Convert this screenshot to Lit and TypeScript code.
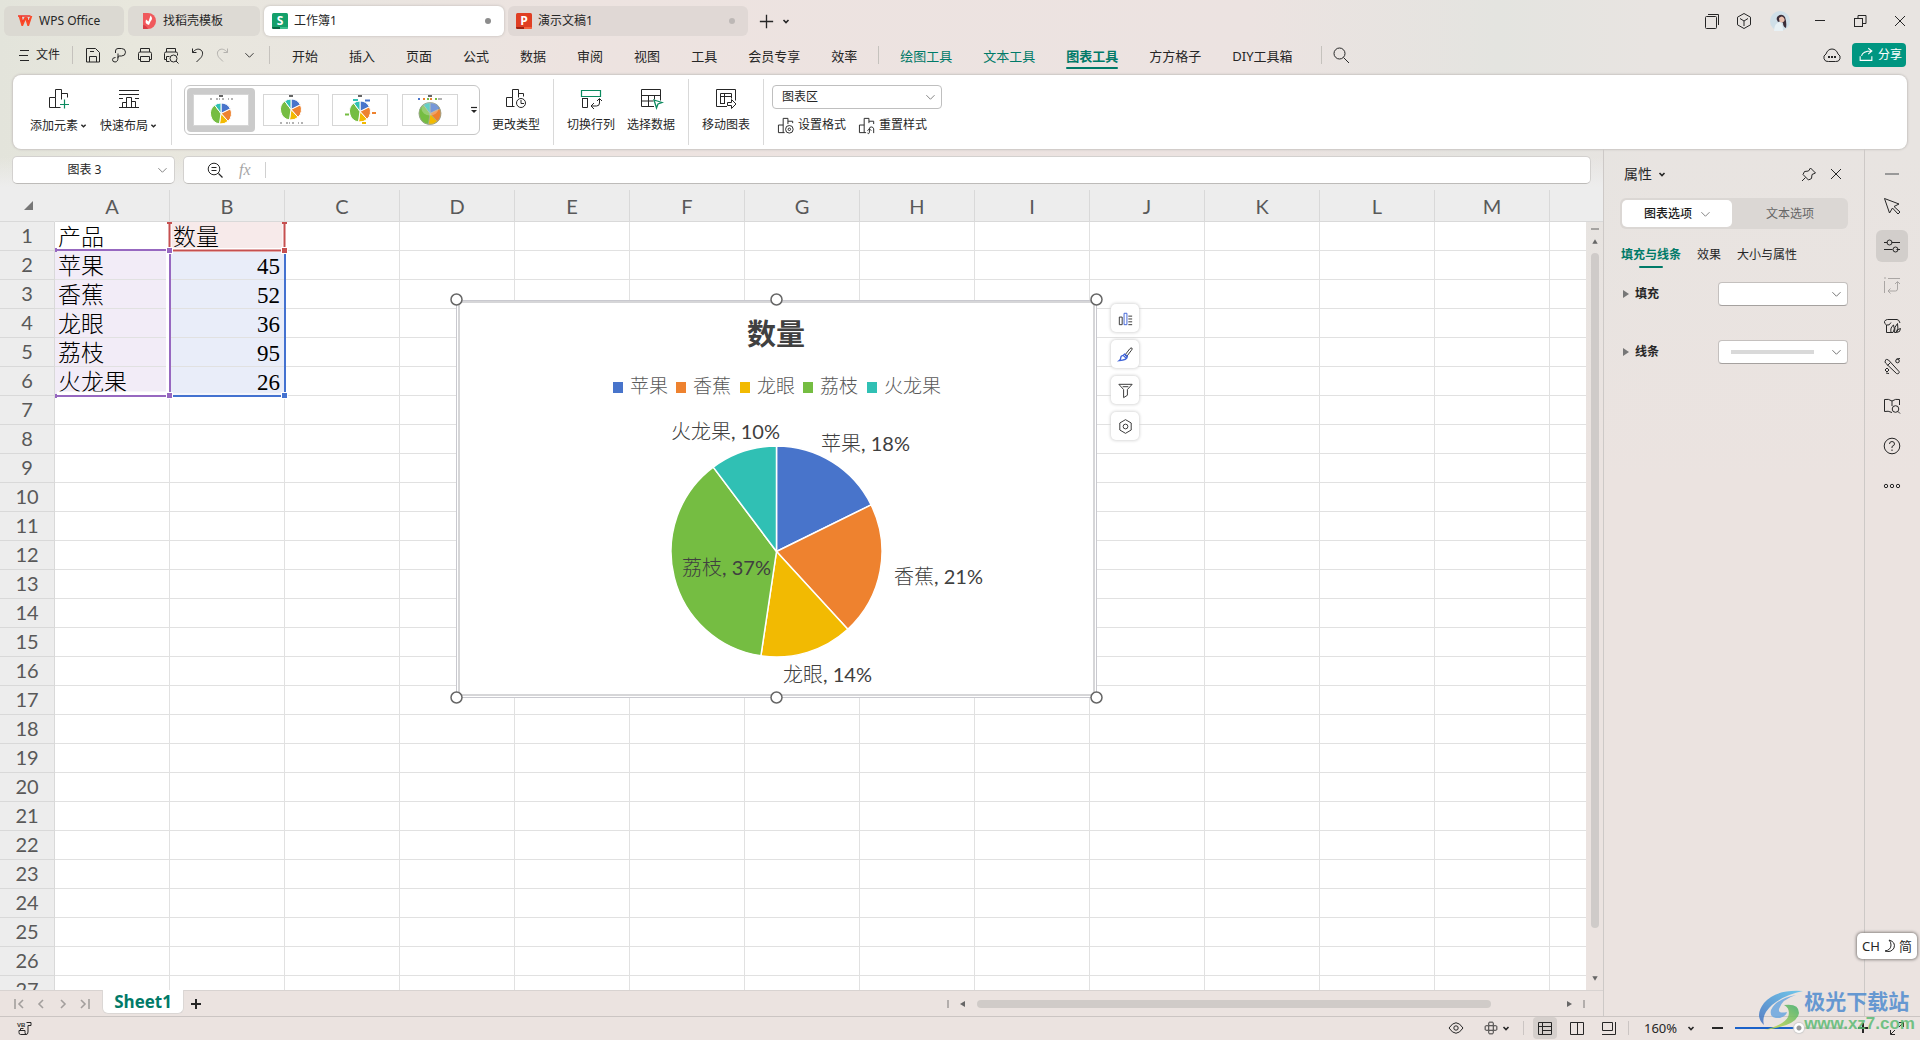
import { LitElement, html, svg, css, nothing } from "lit";
import { customElement, property } from "lit/decorators.js";
import { classMap } from "lit/directives/class-map.js";

interface Slice {
  name: string;
  value: number;
  share: number;
  color: string;
}

/* Shares are rounded so that they add up to one hundred. */
const DATA: Slice[] = [
  { name: "苹果", value: 45, share: 18, color: "#4874cb" },
  { name: "香蕉", value: 52, share: 21, color: "#ee822f" },
  { name: "龙眼", value: 36, share: 14, color: "#f2ba02" },
  { name: "荔枝", value: 95, share: 37, color: "#75bd42" },
  { name: "火龙果", value: 26, share: 10, color: "#30c0b4" },
];
const TOTAL = DATA.reduce((sum, d) => sum + d.value, 0);

/* Wedges of the pie, clockwise from twelve o'clock. */
const pie = (cx: number, cy: number, r: number, edge: string, edgeWidth: number) => {
  let angle = 0;
  return DATA.map((d) => {
    const from = angle;
    angle += (d.value / TOTAL) * Math.PI * 2;
    const point = (a: number) => `${(cx + r * Math.sin(a)).toFixed(2)} ${(cy - r * Math.cos(a)).toFixed(2)}`;
    const large = angle - from > Math.PI ? 1 : 0;
    return svg`<path d="M${cx} ${cy}L${point(from)}A${r} ${r} 0 ${large} 1 ${point(angle)}Z" fill=${d.color} stroke=${edge} stroke-width=${edgeWidth} stroke-linejoin="round"/>`;
  });
};

const ICONS: Record<string, unknown> = {
  menu: svg`<path d="M6 5.500h9M5 10.500h9M6 15.500h9"/>`,
  save: svg`<path d="M3.500 3.500h9l4 4v9.500h-13zM6.500 17v-5.500h7V17M7 6.500h4"/>`,
  pdf: svg`<path d="M6.500 8V6q0-2.500 2.500-2.500h3.500q4 0 4 3.700t-4 3.800H10q-1 0-1 1.500 0 4.500-3 4.500-2.500 0-2.500-2.300 0-2.200 3-2.200M9 8.500V13"/>`,
  print: svg`<path d="M5.500 7V3.500h9V7M5.500 14.500h-2V8.500q0-1.500 1.500-1.500h10q1.500 0 1.500 1.500v6h-2M5.500 11.500h9v5h-9z"/>`,
  preview: svg`<path d="M5.500 7V3.500h9V7M5.500 14.500h-2V8.500q0-1.500 1.500-1.500h10q1.500 0 1.500 1.500v2M5.500 16.500V11.500h3M5.500 16.500h3"/><circle cx="12.500" cy="13.500" r="3.500"/><path d="M15 16l2.500 2.500"/>`,
  undo: svg`<path d="M5.500 3.500v4h4M5.500 7.500C8 4.500 10.500 3.500 13 4.500c3.500 1.500 3 5.500 1 8l-4.500 4.500"/>`,
  redo: svg`<path d="M14.500 3.500v4h-4M14.500 7.500C12 4.500 9.500 3.500 7 4.500c-3.500 1.500-3 5.500-1 8l4 4"/>`,
  down: svg`<path d="M6 8l4.500 4.500L15 8"/>`,
  caret: svg`<path d="M7.500 9l2.500 2.500L12.500 9" stroke-width="1.600"/>`,
  search: svg`<circle cx="8.500" cy="8.500" r="5.500"/><path d="M12.500 12.500l5.500 5.500"/>`,
  cloud: svg`<path d="M6.500 16.500h7a4 4 0 0 0 2.500-7.500c-1-3-3-5-6-5s-5 2-6 5a4 4 0 0 0 2.500 7.500z"/><path d="M6 11h2v2H6zM9 11h2v2H9zM12 11h2v2h-2z" fill="currentColor" stroke="none"/>`,
  share: svg`<path d="M3.500 11.500v4.500h13v-4.500M5 11c1-4 4-5.500 11-5.500M12.500 2.500l4 3-4 3.500" stroke-width="1.200"/>`,
  windows: svg`<path d="M6 3.500h10.500V14"/><rect x="3.500" y="5.500" width="11" height="12" rx="1"/>`,
  cube: svg`<path d="M10 2.500l6.500 3.700v7.600L10 17.500l-6.500-3.700V6.200zM6 7.500L10 10l4-2.500M10 10v5"/>`,
  minimize: svg`<path d="M5 9.500h10"/>`,
  restore: svg`<path d="M8 7V4.500h8v8h-3"/><rect x="4.500" y="7.500" width="8" height="8"/>`,
  close: svg`<path d="M5 5l10 10M15 5L5 15"/>`,
  plus: svg`<path d="M10 3v14M3 10h14" stroke-width="1.400"/>`,
  addElement: svg`<path d="M11.500 18.500h-11v-10h6v10M6.500 8.500v-8h6v10M12.500 4.500h6v4"/><path d="M15.500 10.500v9M11 15.500h9" stroke="#0b8a5f" stroke-width="1.200"/>`,
  layout: svg`<path d="M0 1.500h20M0 5.500h20M0 9.500h4M16 9.500h4M0 18.500h20M3.500 18v-4.500h4M7.500 18V8.500h5V18M12.500 12.500h4V18"/>`,
  changeType: svg`<path d="M8.500 17.500h-8v-9h6v9M6.500 8.500v-8h6v8M12.500 4.500h5v3"/><circle cx="15" cy="14" r="4.500"/><path d="M15 11v3.500h3"/>`,
  swap: svg`<path d="M.500 1.500h19v6H.500z" stroke="#0b8a5f" stroke-width="1.200"/><path d="M1 9.500h6M1.500 9v9.500h5V9"/><path d="M18.500 10v4q0 3-3 3h-5M16 12l2.500-2.500L21 12M13 14l-3 3 3 3" />`,
  select: svg`<path d="M13 17.500H.500V.500h19v11M.500 6.500h19M7.500 6.500v11M13.500 6.500v4M.500 12h12"/><path d="M13 11l8 2.500-4 1.500-1.500 4z" stroke="#0b8a5f" stroke-width="1.300"/>`,
  move: svg`<path d="M11 17.500H.500V.500h19v11M4.500 14.500V4.500h11v5M4.500 7.500h11M8.500 4.500v9.500M4 14.500h5"/><path d="M11.500 13.500h4v-3l4.500 4.500-4.500 4.500v-3h-4z"/>`,
  format: svg`<path d="M8 17.500H1.500v-8h5v8M6.500 9.500v-7h5v6M11.500 5.500h5v2"/><circle cx="13" cy="14" r="4"/><circle cx="13" cy="14" r="1.300"/>`,
  reset: svg`<path d="M8.500 17.500h-7v-8h5v8M6.500 9.500v-7h5v5M11.500 5.500h5v3M10 18c1 1 2 .5 2-1v-3.500q0-2 2-2t2.500 2V18M10 15.500l2-2 2 2"/>`,
  zoomOut: svg`<circle cx="9" cy="9" r="5.800"/><path d="M13.500 13.500l4 4M6.500 7.500h5M6.500 10.500h5" stroke-width="1.200"/>`,
  chartBars: svg`<path d="M3.500 8.500h3v8h-3zM13 7.500h4M13 10.500h4M13 13.500h4M13 16.500h4"/><path d="M8.500 4.500h3v12h-3z" stroke="#3f63d8"/>`,
  brush: svg`<path d="M9.500 10.500l5-6.500q1.500-1.500 2.300-.700t-.5 2.200l-5 6.500z"/><path d="M9 9.500l3 2.500q-.5 4-8.500 4.500 1.500-1 1.500-3t2.500-2.500zM8 11.500l2.500 2" stroke="#3f63d8" stroke-width="1.400"/>`,
  funnel: svg`<path d="M3 3.500h14l-5 5.500v6l-4 2.500V9zM7 6h6"/>`,
  hex: svg`<path d="M10 2.800l6 3.500v7.400l-6 3.500-6-3.500V6.300z"/><circle cx="10" cy="10" r="2.500"/>`,
  pin: svg`<path d="M11.500 4l5 5-3.500 1.500-.5 4-3 1.500-5.500-5.500 1.500-3 4-.5zM6.500 13.500L3 17"/>`,
  dash: svg`<path d="M3 10h14" stroke="#999" stroke-width="2"/>`,
  cursor: svg`<path d="M2.500 2.500l14.500 5.500-5 2.500 6 5.500-2 2-5.500-6-3 5z"/>`,
  sliders: svg`<path d="M2 6.500h3.500M9.500 6.500H18M2 13.500h8.500M14.500 13.500H18"/><circle cx="7.500" cy="6.500" r="2.500"/><circle cx="13.500" cy="13.500" r="2.500"/>`,
  rotate: svg`<path d="M2.500 5v12M6 2.500h12M2 2h2M15.500 6v7q0 2-2 2H6M13 8l2.500-2.500L18 8M8.500 12.500L6 15l2.500 2.500"/>`,
  store: svg`<path d="M9 16.500H4.500V9Q2 7.500 2.500 5.500 3.500 3.500 5.500 3.500h9.500q2 0 3 3.500M4.500 9q3 1 4.500-2.500"/><path d="M9 16.500q-1-5 2.500-7.500 2 4-.5 7.500zM12.500 16.500q-.5-6 3-9 1.500 5-1.500 9zM14.500 16.500q1-4 4-4 0 4-4 4z"/>`,
  tools: svg`<path d="M3 4.500q1.500-2 3.500-.5L17 15.500q.5 1.500-.5 2t-2 0L3.500 7q-1-1 0-2.500zM5.500 9.500L8.500 6.500"/><circle cx="15.500" cy="5" r="1.800"/><path d="M14.500 3l3.500-.5M5 12l2 2-2 2-2-2zM4 17l3 .5"/>`,
  book: svg`<path d="M10 16.500q-4-2-7.500-1V3.500q4-1 7.500 1.500 3.500-2.500 7.500-1.500V9M10 5v5"/><circle cx="13.500" cy="13" r="3.300"/><path d="M16 15.500l2 2"/>`,
  help: svg`<circle cx="10" cy="10" r="7.800"/><path d="M7.500 8q0-2.500 2.500-2.500T12.500 8q0 1.500-2.500 2.500v1.500M10 13.500v1.500"/>`,
  more: svg`<circle cx="4" cy="10" r="1.700"/><circle cx="10" cy="10" r="1.700"/><circle cx="16" cy="10" r="1.700"/>`,
  first: svg`<path d="M6 5v10M14 6l-4 4 4 4" stroke-width="1.600"/>`,
  prev: svg`<path d="M12 6l-4 4 4 4" stroke-width="1.600"/>`,
  next: svg`<path d="M8 6l4 4-4 4" stroke-width="1.600"/>`,
  last: svg`<path d="M14 5v10M6 6l4 4-4 4" stroke-width="1.600"/>`,
  add: svg`<path d="M10 5v10M5 10h10" stroke-width="2"/>`,
  left: svg`<path d="M12 7v6l-5-3z" fill="#666" stroke="none"/>`,
  right: svg`<path d="M8 7v6l5-3z" fill="#666" stroke="none"/>`,
  up: svg`<path d="M7 12h6l-3-5z" fill="#666" stroke="none"/>`,
  bottom: svg`<path d="M7 8h6l-3 5z" fill="#666" stroke="none"/>`,
  eye: svg`<path d="M3 10q7-10.500 14 0-7 10.500-14 0z"/><circle cx="10" cy="10" r="2.200"/>`,
  cross: svg`<rect x="7.500" y="7.500" width="5" height="5"/><path d="M7.500 7V4.500q0-1 1-1h3q1 0 1 1V7M7.500 13v2.500q0 1 1 1h3q1 0 1-1V13M7 7.500H4.500q-1 0-1 1v3q0 1 1 1H7M13 7.500h2.500q1 0 1 1v3q0 1-1 1H13"/>`,
  gridView: svg`<path d="M3.500 4.500h13v12h-13zM3.500 8.500h13M7.500 4.500v12M7.500 12.500h9"/>`,
  pageView: svg`<path d="M3.500 4.500h13v12h-13zM10.500 4.500v12"/>`,
  breakView: svg`<path d="M3.500 4.500h10v8h-10zM16.500 4v12.500H3"/>`,
  expand: svg`<path d="M12 4.500h4.500V9M8 16.500H3.500V12M16 5l-4 4M4 16l4-4"/>`,
};

const icon = (name: string, size = 20) =>
  html`<svg class="icon" width=${size} height=${size} viewBox="0 0 20 20" aria-hidden="true">${ICONS[name]}</svg>`;

const iconStyles = css`
  .icon { display: block; flex: none; fill: none; stroke: currentColor; overflow: visible; }
  button, select, input { font: inherit; color: inherit; margin: 0; padding: 0; border: 0; background: none; border-radius: 0; outline: none; }
  button { display: flex; align-items: center; justify-content: center; white-space: nowrap; }
  a { color: inherit; text-decoration: none; }
  .spacer { flex: 1; }
`;

@customElement("title-bar")
export class TitleBar extends LitElement {
  static styles = [iconStyles, css`
    :host { display: flex; align-items: center; box-sizing: border-box; height: 40px; padding: 6px 0 4px 4px; }
    .tabs { display: flex; gap: 4px; }
    .tab { box-sizing: border-box; height: 30px; padding: 0 13px; gap: 6px; border-radius: 6px; background: #dbd9d2; justify-content: flex-start; }
    .home { width: 120px; }
    .store { width: 132px; background: #dddad4; }
    .file { width: 240px; padding: 0 13px 0 8px; background: #e0d8d5; }
    .file.current { background: #fff; box-shadow: 0 0 3px #bbb6b2; }
    .dot { width: 6px; height: 6px; border-radius: 50%; background: #8c8c8c; }
    .file:not(.current) .dot { background: #bdb8b6; }
    .new { width: 36px; height: 30px; }
    .list { width: 4px; }
    .right { display: flex; align-items: center; }
    .right button { width: 40px; height: 30px; }
    .right .slim { width: 32px; }
  `];
  render() {
    return html`
      <div class="tabs">
        <button class="tab home">
          <svg width="16" height="16" viewBox="0 0 16 16" aria-hidden="true"><path d="M1 3h3l1.500 7L8 5h2l1 5 2.500-5M4 3h9.500" fill="none" stroke="#f0322c" stroke-width="1.600"/><path d="M1.500 3l3 10h1.500L8.500 7l2 6H12l3.300-10h-2L11.300 9 9.500 4H8L5.500 9.500 4 3z" fill="#fb4a28"/></svg>
          WPS Office
        </button>
        <button class="tab store">
          <svg width="16" height="16" viewBox="0 0 16 16" aria-hidden="true"><path d="M2 0h5a8 8 0 0 1 0 16H2z" fill="#f0595c"/><path d="M2 12q3 0 5 4H2z" fill="#d83c44"/><path d="M9.500 2.500q3 3 0 6l-1.500 3.500Q3.500 11 5 6.500l2.500 2z" fill="#fff"/></svg>
          找稻壳模板
        </button>
        <button class="tab file current">
          <svg width="16" height="16" viewBox="0 0 16 16" aria-hidden="true"><rect width="16" height="16" rx="1.500" fill="#14a06b"/><path d="M0 14h8v2H1.500Q0 16 0 14z" fill="#066844"/><path d="M8 14h8q0 2-1.500 2H8z" fill="#3cbf8c"/><text x="8" y="12" text-anchor="middle" font-family="Open Sans" font-weight="700" font-size="12" fill="#fff">S</text></svg>
          工作簿1<span class="spacer"></span><span class="dot"></span>
        </button>
        <button class="tab file">
          <svg width="16" height="16" viewBox="0 0 16 16" aria-hidden="true"><rect width="16" height="16" rx="1.500" fill="#e03e23"/><path d="M0 14h8v2H1.500Q0 16 0 14z" fill="#9c2413"/><path d="M8 14h8q0 2-1.500 2H8z" fill="#f5623f"/><text x="8" y="12" text-anchor="middle" font-family="Open Sans" font-weight="700" font-size="12" fill="#fff">P</text></svg>
          演示文稿1<span class="spacer"></span><span class="dot"></span>
        </button>
      </div>
      <button class="new" aria-label="新建">${icon("plus", 19)}</button>
      <button class="list" aria-label="标签列表">${icon("caret")}</button>
      <span class="spacer"></span>
      <div class="right">
        <button class="slim" aria-label="窗口">${icon("windows")}</button>
        <button class="slim" aria-label="应用">${icon("cube")}</button>
        <button aria-label="账号">
          <svg width="20" height="20" viewBox="0 0 20 20" aria-hidden="true"><circle cx="10" cy="10" r="10" fill="#cfdfe8"/><path d="M4 20q0-8 6-9 3 2 3 9z" fill="#e8f1f5"/><path d="M8 5q4-3 7 1 2 6 1 11-3-1-3-5l-2-2-3 1-1-2q-1-2 1-4z" fill="#3b2d38"/><path d="M9 7q3-3 5 0t-2 4.500q-3 0-3-4.500z" fill="#e9bfae"/></svg>
        </button>
        <button aria-label="最小化">${icon("minimize")}</button>
        <button aria-label="还原">${icon("restore")}</button>
        <button aria-label="关闭">${icon("close")}</button>
      </div>`;
  }
}

@customElement("menu-bar")
export class MenuBar extends LitElement {
  static styles = [iconStyles, css`
    :host { display: flex; align-items: center; height: 35px; padding: 0 14px 5px 14px; box-sizing: border-box; }
    .file { gap: 2px; height: 24px; }
    .sep { width: 1px; height: 18px; background: #c5c2bd; }
    .sep.a { margin: 0 7px 0 12px; }
    .sep.b { margin: 0 22px 0 7px; }
    .sep.c { margin: 0 21px; }
    .sep.d { margin: 0 9px 0 28px; }
    .quick { width: 26px; height: 24px; }
    .quick.off { color: #b4b2ae; }
    nav { display: flex; gap: 31px; font-size: 13px; line-height: 22px; padding-top: 1px; white-space: nowrap; }
    .tool { color: #007a68; }
    .on { font-weight: 700; position: relative; }
    .on::after { content: ""; position: absolute; left: 0; right: 0; bottom: -2px; height: 2px; border-radius: 1px; background: #007a68; }
    .cloud { width: 28px; }
    .share { height: 24px; padding: 0 4px 0 5px; gap: 3px; border-radius: 4px; background: #009681; color: #fff; margin-left: 6px; }
  `];
  render() {
    const main = ["开始", "插入", "页面", "公式", "数据", "审阅", "视图", "工具", "会员专享", "效率"];
    const quick: [string, string][] = [["save", "保存"], ["pdf", "输出为PDF"], ["print", "打印"], ["preview", "打印预览"], ["undo", "撤销"], ["redo", "恢复"], ["down", "更多"]];
    return html`
      <button class="file">${icon("menu")}文件</button>
      <span class="sep a"></span>
      ${quick.map(([n, t]) => html`<button class=${classMap({ quick: true, off: n === "redo" })} aria-label=${t}>${icon(n, n === "down" ? 18 : 20)}</button>`)}
      <span class="sep b"></span>
      <nav>${main.map((m) => html`<a href="#">${m}</a>`)}</nav>
      <span class="sep c"></span>
      <nav>
        <a class="tool" href="#">绘图工具</a><a class="tool" href="#">文本工具</a><a class="tool on" href="#">图表工具</a>
        <a href="#">方方格子</a><a href="#">DIY工具箱</a>
      </nav>
      <span class="sep d"></span>
      <button aria-label="搜索">${icon("search")}</button>
      <span class="spacer"></span>
      <button class="cloud" aria-label="云状态">${icon("cloud")}</button>
      <button class="share">${icon("share", 18)}分享</button>`;
  }
}

@customElement("ribbon-bar")
export class RibbonBar extends LitElement {
  static styles = [iconStyles, css`
    :host { display: flex; box-sizing: border-box; height: 74px; margin: 0 13px; padding-left: 17px; border-radius: 8px; background: #fff; box-shadow: 0 0 2px 1px #c9c5c2; }
    .cmd { flex-direction: column; justify-content: flex-start; gap: 8px; padding-top: 14px; }
    .label { display: flex; align-items: center; line-height: 16px; }
    .label .icon { margin: 0 -4px 0 -3px; }
    .cmd + .cmd { margin-left: 12px; }
    .sep { flex: none; width: 1px; height: 66px; margin: 4px 13px 0; background: #d9d9d9; }
    .sep.tight { margin-right: 8px; }
    .gallery { display: flex; align-items: center; box-sizing: border-box; width: 296px; height: 50px; margin: 10px 12px 0 -1px; padding-left: 2px; gap: 2px; border: 1px solid #c6c6c6; border-radius: 6px; }
    .thumb { width: 68px; height: 44px; border-radius: 4px; }
    .thumb.on { background: #cbcbcb; }
    .drop { width: 10px; margin-left: 3px; }
    .area { display: grid; align-content: start; gap: 8px; padding-top: 10px; }
    .pick { display: grid; align-items: center; width: 170px; height: 24px; box-sizing: border-box; border: 1px solid #bfbfbf; border-radius: 4px; }
    .pick select { grid-area: 1 / 1; appearance: none; width: 100%; height: 100%; padding-left: 9px; }
    .pick .icon { grid-area: 1 / 1; justify-self: end; margin-right: 2px; pointer-events: none; color: #777; }
    .row { display: flex; gap: 12px; padding-left: 5px; line-height: 16px; }
    .row button { gap: 2px; height: 16px; }
  `];
  private thumb(kind: number) {
    const dots = (y: number) => svg`<path d="M17 ${y}h3m3 0h4m2 0h3m3 0h1m2 0h3" stroke="#999" stroke-width="1.500" stroke-dasharray="2 1"/>`;
    const body = [
      svg`${dots(5)}${pie(28, 19.5, 10.500, "#fff", 1)}`,
      svg`${pie(28, 15.500, 10.500, "#fff", 1)}${dots(29)}`,
      svg`${pie(28, 17.500, 10.500, "#fff", 1)}<path d="M33 6.500h5" stroke="#4874cb" stroke-width="2"/><path d="M40 19h4" stroke="#ee822f" stroke-width="2"/><path d="M30 29h4" stroke="#f2ba02" stroke-width="2"/><path d="M13 20.500h4" stroke="#75bd42" stroke-width="2"/><path d="M21 6h5" stroke="#30c0b4" stroke-width="2"/>`,
      svg`<path d="M16 5h2" stroke="#4874cb" stroke-width="2"/><path d="M21 5h2m5 0h2" stroke="#ee822f" stroke-width="2"/><path d="M25 5h2m6 0h2" stroke="#75bd42" stroke-width="2"/><path d="M36 5h4" stroke="#999" stroke-width="1.500"/><circle cx="28" cy="19.500" r="11.300" fill="#8a8f7a"/>${pie(28, 19.5, 10.8, "#a5b09c", 0.600)}<ellipse cx="28" cy="15" rx="8.500" ry="6.500" fill="#fff" opacity=".25"/>`,
    ][kind];
    return html`<svg width="56" height="32" viewBox="0 0 56 32" aria-hidden="true"><rect x=".5" y=".5" width="55" height="31" fill="#fff" stroke="#d6d6d6"/><path d="M26 2h4" stroke="#333" stroke-width="1.500"/>${body}</svg>`;
  }
  private cmd(name: string, label: string, caret = false) {
    return html`<button class="cmd">${icon(name)}<span class="label">${label}${caret ? icon("caret", 17) : nothing}</span></button>`;
  }
  render() {
    return html`
      ${this.cmd("addElement", "添加元素", true)}${this.cmd("layout", "快速布局", true)}
      <span class="sep"></span>
      <div class="gallery">
        ${[0, 1, 2, 3].map((k) => html`<button class=${classMap({ thumb: true, on: k === 0 })} aria-label=${`样式${k + 1}`}>${this.thumb(k)}</button>`)}
        <button class="drop" aria-label="更多样式"><svg class="icon" width="10" height="10" viewBox="0 0 10 10" aria-hidden="true"><path d="M2 2.500h6" stroke-width="1.200"/><path d="M2 5h6L5 8z" fill="currentColor" stroke="none"/></svg></button>
      </div>
      ${this.cmd("changeType", "更改类型")}
      <span class="sep"></span>
      ${this.cmd("swap", "切换行列")}${this.cmd("select", "选择数据")}
      <span class="sep"></span>
      ${this.cmd("move", "移动图表")}
      <span class="sep tight"></span>
      <div class="area">
        <div class="pick"><select aria-label="图表元素"><option>图表区</option></select>${icon("down", 18)}</div>
        <div class="row"><button>${icon("format", 19)}设置格式</button><button>${icon("reset", 19)}重置样式</button></div>
      </div>`;
  }
}

@customElement("pie-chart")
export class PieChart extends LitElement {
  static styles = css`
    :host { display: block; }
    .plot { display: block; width: 100%; height: 100%; overflow: visible; }
    .title { font: 700 29px "Liberation Serif", "Noto Sans CJK SC", serif; fill: #404040; }
    .key { font: 300 19px "Liberation Serif", "Noto Sans CJK SC", serif; fill: #595959; }
    .tag { font: 300 20px "Lato", "Noto Sans CJK SC", sans-serif; fill: #404040; }
    .num { font-weight: 400; }
    .frame { fill: #fff; stroke: #d6d6d8; stroke-width: 2; }
    .outline { fill: #fff; stroke: #c9c9cf; }
    .handle { fill: #fff; stroke: #666; stroke-width: 1.500; }
  `;
  render() {
    const keys = [157, 220, 284, 347, 411];
    const tags = [[365, 152], [438, 285], [327, 383], [226, 276], [215, 140]];
    return html`<svg class="plot" viewBox="0 0 640 398" role="img" aria-label="数量">
      <rect class="outline" x=".5" y="1.500" width="640" height="397"/>
      <rect class="frame" x="3" y="3" width="635" height="393"/>
      <text class="title" x="320" y="46" text-anchor="middle">数量</text>
      ${DATA.map((d, i) => svg`<rect x=${keys[i]} y="83" width="10" height="11" fill=${d.color}/><text class="key" x=${keys[i] + 17} y="94">${d.name}</text>`)}
      ${pie(320.5, 252.5, 105.500, "#fff", 1.500)}
      ${DATA.map((d, i) => svg`<text class="tag" x=${tags[i][0]} y=${tags[i][1]}>${d.name}<tspan class="num">, ${d.share}%</tspan></text>`)}
      ${[0, 320, 640].map((x) => [0.5, 398.5].map((y) => svg`<circle class="handle" cx=${x + 0.5} cy=${y} r="5.500"/>`))}
    </svg>`;
  }
}

@customElement("sheet-grid")
export class SheetGrid extends LitElement {
  static styles = [iconStyles, css`
    :host { display: grid; grid-template-columns: minmax(0, 1fr) 17px; min-height: 0; overflow: hidden; }
    .canvas { position: relative; overflow: hidden; background: #fff; }
    table { border-collapse: separate; border-spacing: 0; table-layout: fixed; width: 1665px; }
    .corner { width: 55px; }
    th { box-sizing: border-box; font: 400 20px/26px "Lato", "Noto Sans", sans-serif; color: #595959; background: #ededed; border: 0 solid #d9d9d9; border-width: 0 1px 1px 0; padding: 0; text-align: center; }
    thead th { height: 34px; padding-top: 2px; border-image: linear-gradient(#ededed 3px, #d9d9d9 3px) 1; }
    thead th:first-child { border-right-color: #ededed; border-image: none; }
    thead svg { display: block; margin-left: 24px; }
    tbody th { height: 29px; padding-bottom: 2px; line-height: 24px; }
    td { box-sizing: border-box; height: 29px; padding: 3px 4px 0 3px; border: 0 solid #e1e1e1; border-width: 0 1px 1px 0; font: 300 23px/24px "Liberation Serif", "Noto Sans CJK SC", serif; color: #000; white-space: nowrap; }
    .number { text-align: right; }
    .cat { background: #f2ecf7; }
    .val { background: #e9edf9; }
    .head { background: #f7eaea; }
    .ranges { position: absolute; left: 0; top: 0; }
    .chart { position: absolute; left: 456px; top: 111px; width: 640px; height: 398px; }
    .float { position: absolute; left: 1111px; top: 116px; display: grid; gap: 8px; }
    .float button { width: 28px; height: 28px; border-radius: 5px; background: #fff; box-shadow: 0 0 3px 1px #dadada; color: #333; }
    .side { display: flex; flex-direction: column; align-items: center; }
    .cap { align-self: stretch; height: 34px; box-sizing: border-box; background: #ededed; border-bottom: 1px solid #d9d9d9; }
    .split { width: 8px; height: 2px; margin: 6px 0 3px; background: #a5a3a1; }
    .track { flex: 1; align-self: stretch; padding: 2px 4px 0; display: flex; flex-direction: column; }
    .thumb { flex: 0 1 675px; width: 8px; margin: 0 auto; border-radius: 4px; background: #cfcbc9; }
    .arrow { margin-bottom: 3px; }
  `];
  render() {
    const cols = [..."ABCDEFGHIJKLMN"];
    const cell = (r: number, c: number) => {
      if (c > 1 || r > 6) return html`<td></td>`;
      if (r === 1) return c === 0 ? html`<td>产品</td>` : html`<td class="head">数量</td>`;
      const d = DATA[r - 2];
      return c === 0 ? html`<td class="cat">${d.name}</td>` : html`<td class="val number">${d.value}</td>`;
    };
    const knob = (x: number, y: number, color: string) => svg`<rect x=${x - 3} y=${y - 3} width="6" height="6" fill=${color} stroke="#fff"/>`;
    return html`
      <div class="canvas">
        <table>
          <thead><tr>
            <th class="corner"><svg width="9" height="9" viewBox="0 0 9 9" aria-hidden="true"><path d="M9 0v9H0z" fill="#777"/></svg></th>
            ${cols.map((c, i) => html`<th scope="col">${i < 13 ? c : nothing}</th>`)}
          </tr></thead>
          <tbody>${Array.from({ length: 27 }, (_, i) => html`<tr><th scope="row">${i + 1}</th>${cols.map((_c, c) => cell(i + 1, c))}</tr>`)}</tbody>
        </table>
        <svg class="ranges" width="300" height="220" fill="none" aria-hidden="true">
          <path d="M57 205.500h110M168 60v146" stroke="#fff" stroke-width="4"/>
          <path d="M172 206h110" stroke="#fff"/>
          <path d="M170 208h115V63" stroke="#4472d0" stroke-width="2"/>
          <path d="M56 62h114v146H56M56 60v4M56 206v4" stroke="#9768c0" stroke-width="2"/>
          <path d="M169.500 35v27h115V35" stroke="#fff" stroke-width="4"/>
          <path d="M167 35h5M169.500 35v26M282 35h5M284.500 35v26M172 62.500h112" stroke="#c65050" stroke-width="2"/>
          ${knob(169.5, 62.5, "#9768c0")}${knob(284.5, 62.5, "#c65050")}${knob(169.5, 207.5, "#9768c0")}${knob(284.5, 207.5, "#4472d0")}
        </svg>
        <pie-chart class="chart"></pie-chart>
        <div class="float">
          <button aria-label="图表元素">${icon("chartBars", 19)}</button>
          <button aria-label="图表样式">${icon("brush", 19)}</button>
          <button aria-label="图表筛选">${icon("funnel", 19)}</button>
          <button aria-label="设置图表区域格式">${icon("hex", 19)}</button>
        </div>
      </div>
      <div class="side">
        <div class="cap"></div><div class="split"></div>
        ${icon("up", 18)}
        <div class="track"><div class="thumb"></div></div>
        <div class="arrow">${icon("bottom", 18)}</div>
      </div>`;
  }
}

@customElement("property-panel")
export class PropertyPanel extends LitElement {
  static styles = [iconStyles, css`
    :host { display: block; box-sizing: border-box; padding: 11px 16px 0; border-left: 1px solid #cdc9c7; }
    header { display: flex; align-items: center; height: 28px; padding-left: 4px; font-size: 14px; }
    header .close { margin: 0 2px 0 7px; }
    .segment { display: flex; box-sizing: border-box; height: 31px; margin-top: 10px; padding: 2px; border-radius: 6px; background: #dbd7d4; }
    .segment button { flex: 1; color: #666; padding-left: 2px; }
    .segment .on { flex: 0 0 110px; box-sizing: border-box; gap: 4px; padding-left: 4px; border-radius: 5px; background: #fff; color: #1c1c1c; font-weight: 500; }
    .segment .icon { color: #777; }
    .tabs { display: flex; gap: 16px; margin: 14px 0 0 1px; line-height: 24px; }
    .tabs .on { position: relative; font-weight: 700; color: #007a68; }
    .tabs .on::after { content: ""; position: absolute; left: 18px; right: 18px; bottom: -1px; height: 2px; border-radius: 1px; background: #007a68; }
    .row { display: flex; align-items: center; height: 24px; margin-top: 15px; }
    .row + .row { margin-top: 34px; }
    .row label { flex: 1; padding-left: 6px; font-weight: 700; }
    .row > svg { margin-left: 3px; }
    .pick { display: grid; align-items: center; box-sizing: border-box; width: 130px; height: 24px; border: 1px solid #c4c0be; border-bottom-color: #a5a19f; border-radius: 4px; background: #fff; }
    .pick > * { grid-area: 1 / 1; }
    .pick select { appearance: none; width: 100%; height: 100%; }
    .pick .icon { justify-self: end; margin-right: 2px; color: #666; pointer-events: none; }
    .stroke { width: 83px; height: 4px; margin-left: 12px; background: #d9d9d9; pointer-events: none; }
  `];
  render() {
    const tri = html`<svg width="6" height="8" viewBox="0 0 6 8" aria-hidden="true"><path d="M0 0l6 4-6 4z" fill="#777"/></svg>`;
    return html`
      <header>属性${icon("caret")}<span class="spacer"></span>
        <button aria-label="固定">${icon("pin")}</button><button class="close" aria-label="关闭">${icon("close")}</button></header>
      <div class="segment"><button class="on">图表选项${icon("down", 18)}</button><button>文本选项</button></div>
      <div class="tabs"><a class="on" href="#">填充与线条</a><a href="#">效果</a><a href="#">大小与属性</a></div>
      <div class="row">${tri}<label for="fill">填充</label><div class="pick"><select id="fill"><option></option></select>${icon("down", 18)}</div></div>
      <div class="row">${tri}<label for="line">线条</label><div class="pick"><select id="line"><option></option></select><span class="stroke"></span>${icon("down", 18)}</div></div>`;
  }
}

@customElement("tool-rail")
export class ToolRail extends LitElement {
  static styles = [iconStyles, css`
    :host { display: flex; flex-direction: column; align-items: center; gap: 8px; box-sizing: border-box; padding: 17px 2px 0 0; border-left: 1px solid #cdc9c7; }
    button { width: 32px; height: 32px; border-radius: 6px; }
    .mini { height: 16px; }
    .on { background: #d2cecb; }
    .off { color: #aaa6a4; }
  `];
  render() {
    const items: [string, string][] = [["cursor", "选择"], ["sliders", "属性"], ["rotate", "行列"], ["store", "稻壳"], ["tools", "工具"], ["book", "查找"], ["help", "帮助"], ["more", "更多"]];
    return html`<button class="mini" aria-label="收起">${icon("dash")}</button>
      ${items.map(([n, t]) => html`<button class=${classMap({ on: n === "sliders", off: n === "rotate" })} aria-label=${t}>${icon(n)}</button>`)}`;
  }
}

@customElement("status-bar")
export class StatusBar extends LitElement {
  @property({ type: Number }) zoom = 160;
  static styles = [iconStyles, css`
    :host { display: flex; align-items: center; box-sizing: border-box; height: 24px; padding: 0 11px 2px 12px; border-top: 1px solid #cbc5c3; }
    button { height: 22px; width: 24px; }
    .page { width: 32px; }
    .focus { width: 22px; margin-left: 12px; }
    .on { background: #d5cfcc; border-radius: 4px; width: 24px; margin: 0 4px; }
    .sep { width: 1px; height: 14px; background: #cbc5c3; }
    .mid { margin: 0 5px 0 13px; }
    .late { margin: 0 15px 0 3px; }
    .caret { width: 28px; }
    .zoom { font-size: 13px; width: 33px; }
    .slim { width: 8px; }
    input { appearance: none; width: 112px; height: 14px; margin: 0 4px 0 6px; background: linear-gradient(90deg, #1b62c9 56%, #c9c4c2 56%) center / 100% 2px no-repeat; }
    input::-webkit-slider-thumb { appearance: none; width: 10px; height: 10px; border-radius: 50%; background: radial-gradient(#999 2px, #fff 3px); box-shadow: 0 0 1px 1px #ccc; }
    .minus svg { stroke-width: 2; }
    .full { margin-left: 10px; }
  `];
  render() {
    return html`
      <button aria-label="宏"><svg class="icon" width="20" height="20" viewBox="0 0 20 20" aria-hidden="true"><text x="3" y="9" font-family="Liberation Sans" font-weight="700" font-size="6" fill="#333" stroke="none">VB</text><path d="M12.500 4.500H17v3h-3V14q0 2.500-2 2.500H6.500q-1.500 0-1.500-2V12.500h6v2q0 2 1.500 2M6.500 12.500v-2h3"/></svg></button>
      <span class="spacer"></span>
      <button aria-label="阅读模式">${icon("eye")}</button>
      <button class="focus" aria-label="聚焦">${icon("cross", 18)}</button>
      <button class="slim" aria-label="聚焦选项">${icon("caret")}</button>
      <span class="sep mid"></span>
      <button class="on" aria-label="普通视图">${icon("gridView")}</button>
      <button class="page" aria-label="分页预览">${icon("pageView")}</button>
      <button class="page" aria-label="页面布局">${icon("breakView")}</button>
      <span class="sep late"></span>
      <span class="zoom">${this.zoom}%</span>
      <button class="caret" aria-label="缩放比例">${icon("caret")}</button>
      <button class="minus" aria-label="缩小"><svg class="icon" width="12" height="12" viewBox="0 0 12 12" aria-hidden="true"><path d="M1 6h11"/></svg></button>
      <input type="range" min="0" max="100" value="58" aria-label="缩放" />
      <button aria-label="放大">${icon("add")}</button>
      <button class="full" aria-label="全屏">${icon("expand")}</button>`;
  }
}

@customElement("app-root")
export class AppRoot extends LitElement {
  static styles = [iconStyles, css`
    :host { position: relative; display: grid; grid-template-rows: auto auto auto minmax(0, 1fr) auto; height: 100vh; overflow: hidden; color: #262626; font: 12px/16px "Noto Sans", "Noto Sans CJK SC", sans-serif;
      background: linear-gradient(180deg, transparent 0 150px, #ebe3e0 480px), linear-gradient(90deg, #e3e4db 0, #e8e7dd 7%, #e9e5e0 18%, #ede3e0 30%, #ece3e1 65%, #e4e4e0 78%, #e8e4e1 86%, #e8e4e1); }
    .work { display: grid; grid-template-columns: minmax(0, 1fr) 261px 56px; }
    .left { display: grid; grid-template-rows: auto minmax(0, 1fr) auto; min-width: 0; min-height: 0; background: linear-gradient(180deg, transparent 8px, #ededed 38px, #ededed 72px, transparent 72px); }
    .formula { display: flex; gap: 8px; height: 28px; padding: 7px 12px 4px; }
    .box { display: flex; align-items: center; box-sizing: border-box; border: 1px solid #d3d1cf; border-bottom-color: #bdbbb9; border-radius: 5px; background: #fff; }
    .name { width: 163px; }
    .name input { flex: 1; min-width: 0; text-align: center; padding-left: 6px; }
    .name button { width: 24px; color: #777; }
    .expr { flex: 1; padding-left: 21px; }
    .fx { font: italic 16px/20px "Liberation Serif", serif; color: #a6a6a6; width: 20px; margin: 0 6px 0 14px; }
    .bar { width: 1px; height: 16px; background: #d0d0d0; }
    .expr input { flex: 1; height: 100%; }
    .sheets { display: flex; align-items: center; height: 26px; border-top: 1px solid #d8d3d1; box-sizing: border-box; }
    .nav { display: flex; color: #a39f9d; padding: 0 6px 0 8px; }
    .nav button { width: 22px; height: 24px; }
    .sheet { align-self: start; box-sizing: border-box; height: 24px; width: 82px; margin-top: -1px; border: 1px solid #dbd7d5; border-top: 0; border-radius: 0 0 6px 6px; background: #fff; color: #007a68; font: 700 17px/24px "Open Sans", "Noto Sans", sans-serif; }
    .add { width: 24px; }
    .hscroll { display: flex; align-items: center; width: 41%; box-sizing: border-box; padding: 0 18px 0 1px; gap: 8px; }
    .tick { width: 2px; height: 8px; background: #b3aeac; }
    .hthumb { flex: 0 0 80.500%; height: 8px; border-radius: 4px; background: #d0cbc8; }
    .hscroll .icon { margin: 0 -4px 0 -4px; }
    .ime { position: absolute; right: 3px; bottom: 81px; display: flex; align-items: center; justify-content: space-between; box-sizing: border-box; width: 60px; height: 26px; padding: 0 5px; border-radius: 5px; background: #fff; box-shadow: 0 0 3px 1px #8a8583; font-size: 13px; }
    .mark { position: absolute; right: 5px; bottom: 8px; display: flex; align-items: center; pointer-events: none; opacity: .85; }
    .mark .cn { font: 700 21px/22px "Noto Sans CJK SC", sans-serif; color: #4f8bcf; }
    .mark .url { margin-top: 5px; font: 700 17px/16px "Liberation Sans", sans-serif; color: #5dbb74; }
  `];
  render() {
    return html`
      <title-bar></title-bar>
      <menu-bar></menu-bar>
      <ribbon-bar></ribbon-bar>
      <div class="work">
        <main class="left">
          <div class="formula">
            <div class="box name"><input aria-label="名称框" value="图表 3" /><button aria-label="名称列表">${icon("down", 18)}</button></div>
            <div class="box expr">${icon("zoomOut")}<span class="fx">fx</span><span class="bar"></span><input aria-label="编辑栏" /></div>
          </div>
          <sheet-grid></sheet-grid>
          <div class="sheets">
            <div class="nav">
              <button aria-label="第一张">${icon("first")}</button><button aria-label="上一张">${icon("prev")}</button>
              <button aria-label="下一张">${icon("next")}</button><button aria-label="最后一张">${icon("last")}</button>
            </div>
            <button class="sheet">Sheet1</button>
            <button class="add" aria-label="新建工作表">${icon("add")}</button>
            <span class="spacer"></span>
            <div class="hscroll"><span class="tick"></span>${icon("left")}<span class="hthumb"></span><span class="spacer"></span>${icon("right")}<span class="tick"></span></div>
          </div>
        </main>
        <property-panel></property-panel>
        <tool-rail></tool-rail>
      </div>
      <status-bar></status-bar>
      <div class="ime">CH<svg class="icon" width="13" height="14" viewBox="0 0 13 14" aria-hidden="true"><path d="M6 1q7 2 5 8-3 5-9 3 6-1 6-6 0-3-2-5z"/></svg>简</div>
      <div class="mark">
        <svg width="46" height="42" viewBox="0 0 46 42" aria-hidden="true">
          <defs>
            <linearGradient id="sky" x1="0" y1="1" x2="1" y2="0"><stop offset="0" stop-color="#3f6fc0"/><stop offset="1" stop-color="#5cc4ee"/></linearGradient>
            <linearGradient id="leaf" x1="0" y1="1" x2="1" y2="0"><stop offset="0" stop-color="#d8e04a"/><stop offset="1" stop-color="#3fae6a"/></linearGradient>
          </defs>
          <path d="M45 1Q18-1 6 13-4 26 6 35 3 25 14 15 26 5 45 1z" fill="url(#sky)"/>
          <path d="M38 5Q18 9 13 20q-2 9 9 8 6-2 7-6-9 2-8-3Q24 9 38 5z" fill="#6aa7df"/>
          <path d="M26 15q15-2 15 8-2 13-35 17 20-5 24-13 3-8-4-12z" fill="url(#leaf)"/>
        </svg>
        <div><div class="cn">极光下载站</div><div class="url">www.xz7.com</div></div>
      </div>`;
  }
}
